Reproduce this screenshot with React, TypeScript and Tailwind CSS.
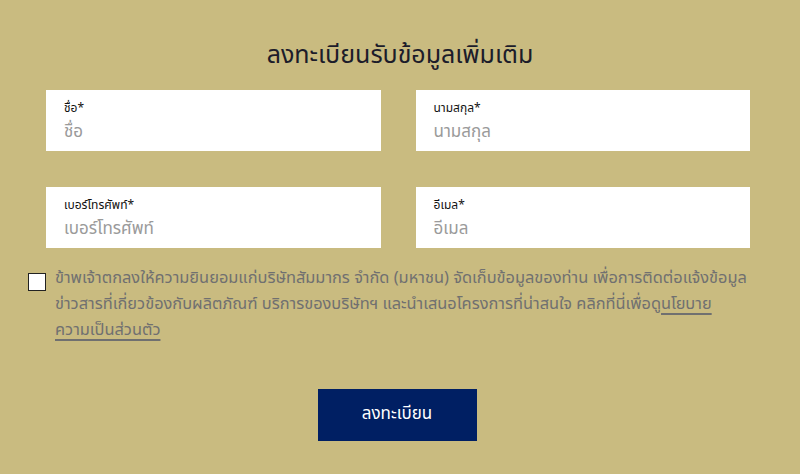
import React from "react";

function Field({ label, placeholder }: { label: string; placeholder: string }) {
  return (
    <div className="bg-white h-[61px] flex flex-col justify-center pl-[18px] gap-[5px] pt-[2px]">
      <div className="text-[12px] leading-[16px] text-[#111]">{label}</div>
      <div className="text-[17px] leading-[22px] text-[#9a9a9a]">{placeholder}</div>
    </div>
  );
}

export default function App() {
  return (
    <div
      className="w-[800px] h-[474px] bg-[#c9bb80] flex flex-col items-center"
      style={{ fontFamily: '"Noto Sans Thai", "Noto Sans", "Loma", "Garuda", sans-serif' }}
    >
      <h1 className="mt-[38px] text-[25px] leading-[34px] text-[#1c1c2a] font-normal">
        ลงทะเบียนรับข้อมูลเพิ่มเติม
      </h1>
      <div className="mt-[18px] w-[704px] mr-[4px] grid grid-cols-2 gap-x-[35px] gap-y-[36px]">
        <Field label="ชื่อ*" placeholder="ชื่อ" />
        <Field label="นามสกุล*" placeholder="นามสกุล" />
        <Field label="เบอร์โทรศัพท์*" placeholder="เบอร์โทรศัพท์" />
        <Field label="อีเมล*" placeholder="อีเมล" />
      </div>
      <div className="mt-[17px] w-[744px] self-start ml-[28px] flex gap-[9px]">
        <div className="mt-[8px] w-[18px] h-[18px] shrink-0 bg-white border border-[#222]" />
        <p className="text-[16.4px] leading-[26px] text-[#707070]">
          <span className="whitespace-nowrap">
            ข้าพเจ้าตกลงให้ความยินยอมแก่บริษัทสัมมากร จำกัด (มหาชน) จัดเก็บข้อมูลของท่าน เพื่อการติดต่อแจ้งข้อมูล
          </span>
          <br />
          <span className="whitespace-nowrap">
            ข่าวสารที่เกี่ยวข้องกับผลิตภัณฑ์ บริการของบริษัทฯ และนำเสนอโครงการที่น่าสนใจ คลิกที่นี่เพื่อดู
            <span className="underline decoration-[2px] underline-offset-[4px]">นโยบาย</span>
          </span>
          <br />
          <span className="underline decoration-[2px] underline-offset-[4px]">ความเป็นส่วนตัว</span>
        </p>
      </div>
      <button className="mt-[46px] w-[159px] h-[52px] bg-[#001f63] text-white text-[17px] mr-[6px]">
        ลงทะเบียน
      </button>
    </div>
  );
}
